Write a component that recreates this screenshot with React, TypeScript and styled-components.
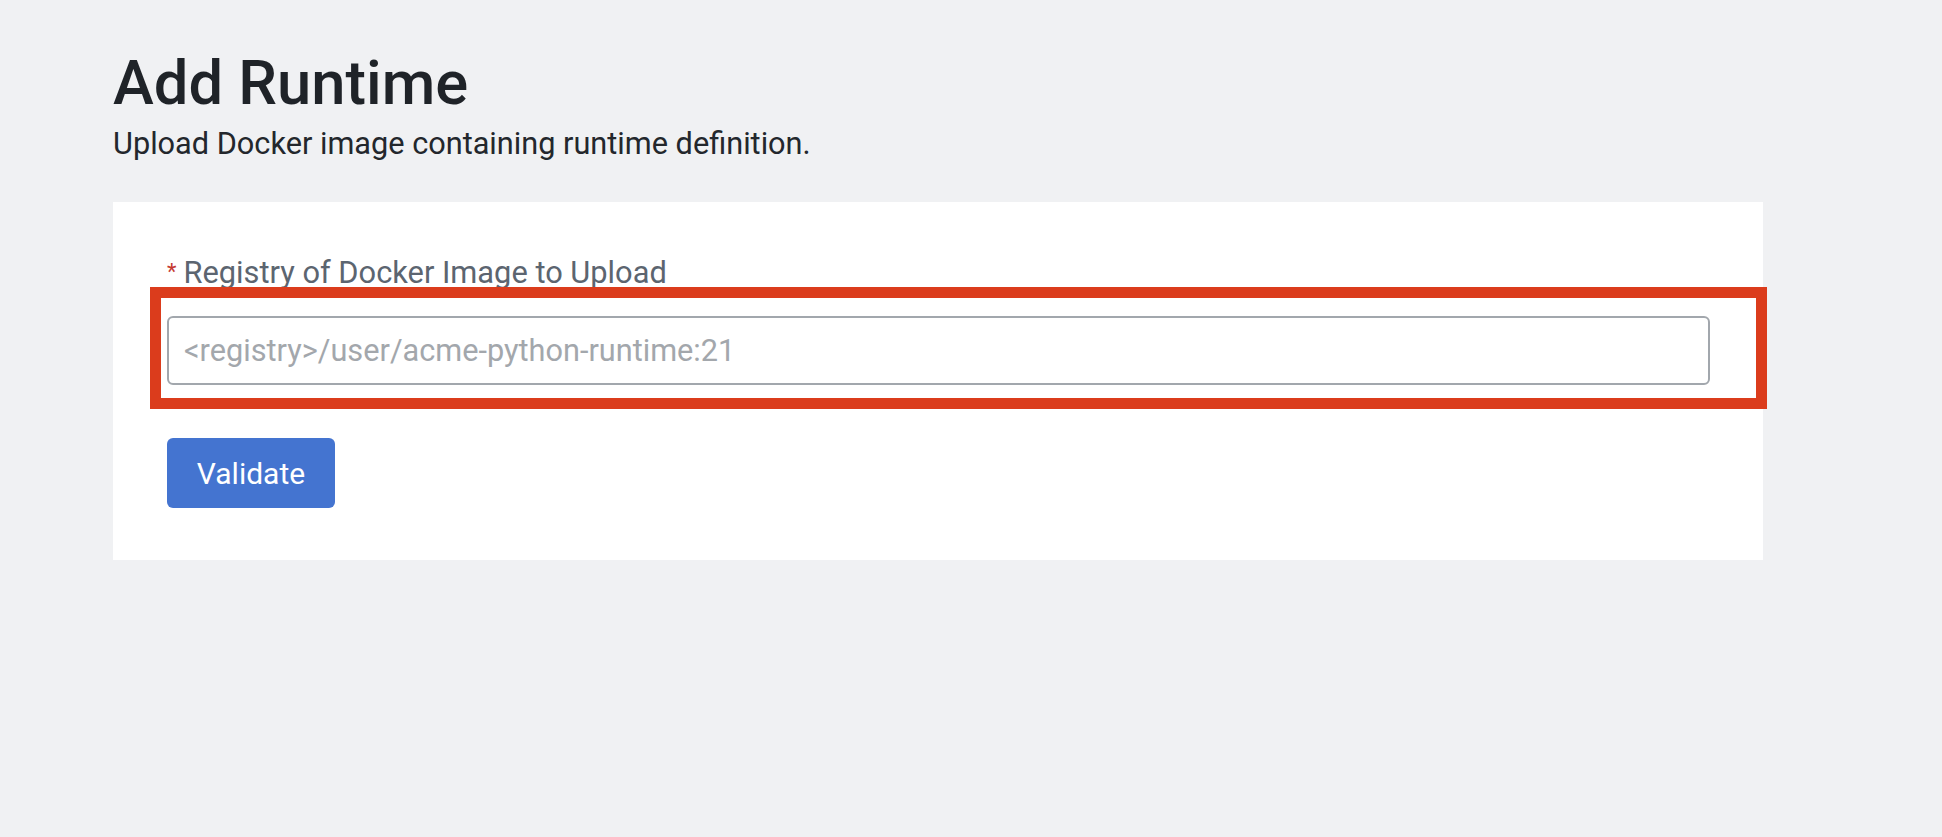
import React from "react";
import styled, { createGlobalStyle } from "styled-components";

const GlobalStyle = createGlobalStyle`
  html, body {
    margin: 0;
    padding: 0;
    background: #f0f1f3;
    font-family: Roboto, "Liberation Sans", Arial, sans-serif;
  }
  * { box-sizing: border-box; }
`;

const Page = styled.main`
  min-height: 837px;
  padding: 47px 0 0 113px;
  background: #f0f1f3;
`;

const Title = styled.h1`
  margin: 0;
  font-size: 61.5px;
  line-height: 72px;
  font-weight: 500;
  color: #1f2328;
`;

const Subtitle = styled.p`
  margin: 7px 0 0;
  font-size: 30.7px;
  line-height: 36px;
  font-weight: 400;
  color: #23272c;
`;

const Card = styled.section`
  width: 1650px;
  margin-top: 40px;
  padding: 53px 53px 52px 54px;
  background: #ffffff;
  display: flex;
  flex-direction: column;
  align-items: flex-start;
`;

const Field = styled.div`
  display: flex;
  flex-direction: column;
  width: 100%;
`;

const Label = styled.label`
  display: flex;
  align-items: flex-start;
  gap: 7px;
  font-size: 30.8px;
  line-height: 36px;
  color: #5c6570;
`;

const Required = styled.span`
  color: #c53a32;
  font-size: 22px;
  line-height: 34px;
`;

const InputWrap = styled.div`
  position: relative;
  margin-top: 25px;
  width: 100%;
`;

const Input = styled.input`
  display: block;
  width: 100%;
  height: 69px;
  padding: 0 15px;
  border: 2px solid #a2a7ad;
  border-radius: 6px;
  background: #ffffff;
  font-family: Roboto, "Liberation Sans", Arial, sans-serif;
  font-size: 30.7px;
  color: #23272c;
  outline: none;
  &::placeholder {
    color: #a3a7ac;
  }
`;

const Highlight = styled.div`
  position: absolute;
  left: -17px;
  top: -29px;
  right: -57px;
  bottom: -24px;
  border: 11px solid #db3c1c;
  pointer-events: none;
`;

const Button = styled.button`
  margin-top: 53px;
  width: 168px;
  height: 70px;
  border: none;
  border-radius: 6px;
  background: #4474d0;
  color: #ffffff;
  font-family: Roboto, "Liberation Sans", Arial, sans-serif;
  font-size: 30px;
  font-weight: 400;
  cursor: pointer;
`;

export default function App() {
  return (
    <>
      <GlobalStyle />
      <Page>
        <Title>Add Runtime</Title>
        <Subtitle>Upload Docker image containing runtime definition.</Subtitle>
        <Card>
          <Field>
            <Label htmlFor="registry">
              <Required>*</Required>
              <span>Registry of Docker Image to Upload</span>
            </Label>
            <InputWrap>
              <Input id="registry" placeholder="<registry>/user/acme-python-runtime:21" />
              <Highlight />
            </InputWrap>
          </Field>
          <Button>Validate</Button>
        </Card>
      </Page>
    </>
  );
}
